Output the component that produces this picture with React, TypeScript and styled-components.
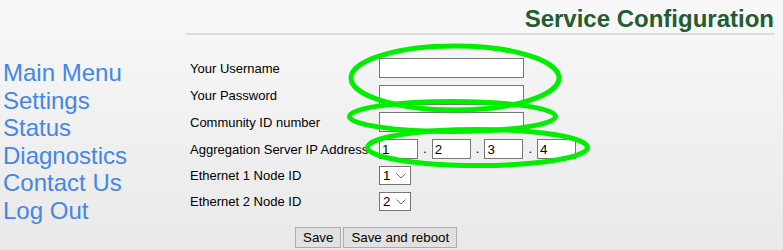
import React from "react";
import styled, { createGlobalStyle } from "styled-components";

const GlobalStyle = createGlobalStyle`
  html, body {
    margin: 0;
    padding: 0;
  }
  body {
    min-height: 250px;
    background: linear-gradient(to bottom, #f8f8f8 0%, #e9e9e9 250px);
    font-family: "Liberation Sans", Arial, sans-serif;
    color: #000;
  }
`;

const Page = styled.div`
  position: relative;
  display: flex;
  align-items: flex-start;
  height: 250px;
  overflow: hidden;
`;

const Nav = styled.nav`
  width: 183px;
  flex: none;
  padding: 59px 0 0 3px;
  display: flex;
  flex-direction: column;
`;

const NavLink = styled.a`
  display: block;
  font-size: 24px;
  line-height: 27.6px;
  color: #4386e8;
  text-decoration: none;
`;

const Main = styled.main`
  flex: 1;
  margin-right: 8px;
  display: flex;
  flex-direction: column;
`;

const Header = styled.header`
  padding-top: 5px;
  border-bottom: 2px solid #dcdcdc;
  text-align: right;
  padding-right: 1px;
`;

const Title = styled.h1`
  margin: 0;
  font-size: 24px;
  line-height: 28px;
  font-weight: bold;
  color: #245b30;
`;

const Form = styled.form`
  margin-top: 23px;
  padding-left: 4px;
  display: grid;
  grid-template-columns: 189px auto;
  row-gap: 7px;
  align-items: center;
`;

const Label = styled.label`
  font-size: 13px;
  line-height: 15px;
  white-space: nowrap;
`;

const TextInput = styled.input<{ $w: number }>`
  box-sizing: border-box;
  width: ${(p) => p.$w}px;
  height: 20px;
  border: 1px solid #767676;
  background: #fff;
  padding: 1px 2px;
  margin: 0;
  font-family: "Liberation Sans", Arial, sans-serif;
  font-size: 13.33px;
  color: #000;
  outline: none;
`;

const IpRow = styled.div`
  display: flex;
  align-items: center;
`;

const Dot = styled.span`
  width: 13.7px;
  text-align: center;
  font-size: 13px;
  line-height: 20px;
`;

const SelectWrap = styled.div`
  position: relative;
  width: 32px;
  height: 19px;
`;

const Select = styled.select`
  appearance: none;
  -webkit-appearance: none;
  box-sizing: border-box;
  width: 32px;
  height: 19px;
  margin: 0;
  padding: 0 0 0 3px;
  border: 1px solid #767676;
  border-radius: 0;
  background: #fff;
  font-family: "Liberation Sans", Arial, sans-serif;
  font-size: 13.33px;
  color: #000;
  outline: none;
`;

const Chevron = styled.svg`
  position: absolute;
  right: 5px;
  top: 7px;
  pointer-events: none;
`;

const Buttons = styled.div`
  margin-top: 16px;
  padding-left: 109px;
  display: flex;
  gap: 2px;
`;

const Button = styled.button`
  box-sizing: border-box;
  height: 21px;
  margin: 0;
  padding: 0 7px;
  border: 1px solid #adadad;
  border-radius: 0;
  background: #e1e1e1;
  font-family: "Liberation Sans", Arial, sans-serif;
  font-size: 13.33px;
  color: #000;
`;

const Marks = styled.svg`
  position: absolute;
  left: 0;
  top: 0;
  pointer-events: none;
`;

const navItems = ["Main Menu", "Settings", "Status", "Diagnostics", "Contact Us", "Log Out"];

function NodeSelect({ value }: { value: string }) {
  return (
    <SelectWrap>
      <Select defaultValue={value}>
        <option value="1">1</option>
        <option value="2">2</option>
      </Select>
      <Chevron width="10" height="6" viewBox="0 0 10 6">
        <path d="M0.5 0.5 L5 5 L9.5 0.5" fill="none" stroke="#6d6d6d" strokeWidth="1" />
      </Chevron>
    </SelectWrap>
  );
}

export default function App() {
  return (
    <>
      <GlobalStyle />
      <Page>
        <Nav>
          {navItems.map((n) => (
            <NavLink key={n} href="#">
              {n}
            </NavLink>
          ))}
        </Nav>
        <Main>
          <Header>
            <Title>Service Configuration</Title>
          </Header>
          <Form onSubmit={(e) => e.preventDefault()}>
            <Label>Your Username</Label>
            <TextInput $w={145} type="text" />
            <Label>Your Password</Label>
            <TextInput $w={145} type="password" />
            <Label>Community ID number</Label>
            <TextInput $w={145} type="text" />
            <Label>Aggregation Server IP Address</Label>
            <IpRow>
              <TextInput $w={39} defaultValue="1" />
              <Dot>.</Dot>
              <TextInput $w={39} defaultValue="2" />
              <Dot>.</Dot>
              <TextInput $w={39} defaultValue="3" />
              <Dot>.</Dot>
              <TextInput $w={39} defaultValue="4" />
            </IpRow>
            <Label>Ethernet 1 Node ID</Label>
            <NodeSelect value="1" />
            <Label>Ethernet 2 Node ID</Label>
            <NodeSelect value="2" />
          </Form>
          <Buttons>
            <Button type="button">Save</Button>
            <Button type="button">Save and reboot</Button>
          </Buttons>
        </Main>
        <Marks width="783" height="250" viewBox="0 0 783 250">
          <g fill="none" stroke="#00ee00" strokeWidth="5">
            <ellipse cx="455" cy="78" rx="104" ry="32" />
            <ellipse cx="452.5" cy="116.5" rx="103" ry="15" />
            <ellipse cx="477.5" cy="147.5" rx="110" ry="18" />
          </g>
        </Marks>
      </Page>
    </>
  );
}
